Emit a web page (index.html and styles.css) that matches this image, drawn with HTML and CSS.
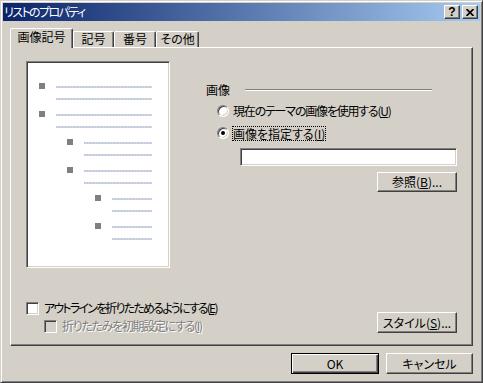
FILE: index.html
```html
<!DOCTYPE html>
<html lang="ja">
<head>
<meta charset="utf-8">
<title>リストのプロパティ</title>
<link rel="stylesheet" href="styles.css">
</head>
<body>
<div class="window">
  <div class="titlebar">
    <span class="title">リストのプロパティ</span>
    <div class="tbtns">
      <span class="tbtn help">?</span>
      <span class="tbtn"><svg width="8" height="7" viewBox="0 0 8 7"><path d="M0.5 0 L7.5 7 M7.5 0 L0.5 7" stroke="#000" stroke-width="1.7" fill="none"/></svg></span>
    </div>
  </div>
  <div class="body">
    <div class="tabs">
      <div class="tab active w1">画像記号</div>
      <div class="tab w2">記号</div>
      <div class="tab w3">番号</div>
      <div class="tab w4">その他</div>
    </div>
    <div class="panel">
      <div class="top">
        <div class="preview">
          <div class="item"><span class="bullet"></span><div class="lines"><i></i><i></i></div></div>
          <div class="item"><span class="bullet"></span><div class="lines"><i></i><i></i></div></div>
          <div class="item lv2"><span class="bullet"></span><div class="lines"><i></i><i></i></div></div>
          <div class="item lv2"><span class="bullet"></span><div class="lines"><i></i><i></i></div></div>
          <div class="item lv3"><span class="bullet"></span><div class="lines"><i></i><i></i></div></div>
          <div class="item lv3"><span class="bullet"></span><div class="lines"><i></i><i></i></div></div>
        </div>
        <div class="right">
          <div class="group-head"><span>画像</span><div class="etch"></div></div>
          <div class="radio-row"><span class="radio"></span><span class="sp-r1">現在のテーマの画像を使用する(<u>U</u>)</span></div>
          <div class="radio-row"><span class="radio checked"></span><span class="focus">画像を指定する(<u>I</u>)</span></div>
          <div class="field"></div>
          <div class="btn-row"><div class="btn browse">参照(<u>B</u>)...</div></div>
        </div>
      </div>
      <div class="bottom">
        <div class="checks">
          <div class="check-row"><span class="check"></span><span class="sp-c1">アウトラインを折りたためるようにする(<u>E</u>)</span></div>
          <div class="check-row sub disabled"><span class="check"></span><span class="sp-c2">折りたたみを初期設定にする(<u>I</u>)</span></div>
        </div>
        <div class="btn style">スタイル(<u>S</u>)...</div>
      </div>
    </div>
    <div class="actions">
      <div class="btn default ok">OK</div>
      <div class="btn cancel">キャンセル</div>
    </div>
  </div>
</div>
</body>
</html>
```
FILE: styles.css
```css
* { box-sizing: border-box; }
html, body { margin: 0; padding: 0; background: #d4d0c8; }
body {
  font-family: "Noto Sans CJK JP", "Noto Sans", sans-serif;
  font-size: 12px;
  line-height: 14px;
  font-feature-settings: "palt";
  color: #000;
}
u { text-decoration: underline; text-underline-offset: 1px; }

.window {
  width: 483px;
  height: 383px;
  background: #d4d0c8;
  border: 1px solid;
  border-color: #d4d0c8 #404040 #404040 #d4d0c8;
  box-shadow: inset 1px 1px #fff, inset -1px -1px #808080;
  padding: 2px;
  display: flex;
  flex-direction: column;
}

.titlebar {
  height: 18px;
  background: linear-gradient(to right, #0a246a, #a6caf0);
  display: flex;
  align-items: center;
  justify-content: space-between;
  padding: 0 2px 0 1px;
}
.title { color: #fff; letter-spacing: -1.6px; }
.tbtns { display: flex; gap: 2px; }
.tbtn {
  width: 16px;
  height: 14px;
  background: #d4d0c8;
  border: 1px solid;
  border-color: #fff #404040 #404040 #fff;
  box-shadow: inset -1px -1px #808080;
  display: flex;
  align-items: center;
  justify-content: center;
}
.help {
  font-family: "Liberation Sans", sans-serif;
  font-weight: bold;
  font-size: 12px;
  line-height: 12px;
}

.body { padding: 7px 7px 0 7px; }

.tabs {
  height: 19px;
  display: flex;
  align-items: flex-end;
}
.tab {
  height: 16px;
  border-top: 1px solid #fff;
  border-left: 1px solid #fff;
  border-right: 1px solid #404040;
  box-shadow: inset -1px 0 #808080;
  border-radius: 2px 2px 0 0;
  text-align: center;
  background: #d4d0c8;
}
.tab.active {
  height: 20px;
  margin-bottom: -1px;
  padding-top: 1px;
  position: relative;
  z-index: 1;
}
.w1 { width: 63px; }
.w2 { width: 41px; }
.w3 { width: 42px; }
.w4 { width: 43px; }

.panel {
  border: 1px solid;
  border-color: #fff #404040 #404040 #fff;
  box-shadow: inset -1px -1px #808080;
  padding: 13px 0 11px 15px;
}
.top { display: flex; }

.preview {
  width: 144px;
  height: 207px;
  background: #fff;
  border: 1px solid;
  border-color: #808080 #fff #fff #808080;
  box-shadow: inset 1px 1px #404040, inset -1px -1px #d4d0c8;
  padding: 21px 17px 0 12px;
}
.item { display: flex; height: 28px; }
.item.lv2 { padding-left: 28px; }
.item.lv3 { padding-left: 56px; }
.bullet {
  width: 6px;
  height: 6px;
  background: #808080;
  margin-right: 11px;
  flex: none;
}
.lines {
  flex: 1;
  padding-top: 3px;
  display: flex;
  flex-direction: column;
  gap: 10px;
}
.lines i {
  display: block;
  height: 2px;
  background: repeating-linear-gradient(90deg, #b4c8f4 0 1px, #d4d4d4 1px 3px);
}

.right {
  flex: 1;
  margin-left: 36px;
  padding: 22px 15px 0 0;
}
.group-head {
  display: flex;
  align-items: center;
  height: 14px;
}
.etch {
  flex: 1;
  height: 2px;
  border-top: 1px solid #808080;
  border-bottom: 1px solid #fff;
  margin: 0 25px 0 15px;
}
.radio-row {
  display: flex;
  align-items: center;
  gap: 4px;
  height: 16px;
  margin-top: 6px;
  padding-left: 11px;
}
.radio {
  width: 12px;
  height: 12px;
  border-radius: 50%;
  background: #fff;
  border: 1px solid;
  border-color: #808080 #fff #fff #808080;
  box-shadow: inset 1px 1px #404040, inset -1px -1px #d4d0c8;
  display: flex;
  align-items: center;
  justify-content: center;
  flex: none;
}
.radio.checked::after {
  content: "";
  width: 4px;
  height: 4px;
  border-radius: 50%;
  background: #000;
}
.focus {
  outline: 1px dotted #000;
  line-height: 13px;
}
.sp-r1 { letter-spacing: -1.2px; }
.sp-c1 { letter-spacing: -1.8px; }
.sp-c2 { letter-spacing: -1.3px; }
.field {
  margin: 7px 0 0 34px;
  height: 18px;
  background: #fff;
  border: 1px solid;
  border-color: #808080 #fff #fff #808080;
  box-shadow: inset 1px 1px #404040, inset -1px -1px #d4d0c8;
}
.btn-row {
  display: flex;
  justify-content: flex-end;
  margin-top: 6px;
}

.btn {
  background: #d4d0c8;
  border: 1px solid;
  border-color: #fff #404040 #404040 #fff;
  box-shadow: inset -1px -1px #808080, inset 1px 1px #d4d0c8;
  display: flex;
  align-items: center;
  justify-content: center;
  height: 21px;
}
.browse { width: 80px; height: 20px; }
.style { width: 80px; margin: 0 15px 1px 0; }

.bottom {
  display: flex;
  justify-content: space-between;
  align-items: flex-end;
  margin-top: 32px;
}
.checks { display: flex; flex-direction: column; gap: 2px; }
.check-row {
  display: flex;
  align-items: center;
  gap: 5px;
  height: 16px;
}
.check-row.sub { padding-left: 18px; }
.check {
  width: 13px;
  height: 13px;
  background: #fff;
  border: 1px solid;
  border-color: #808080 #fff #fff #808080;
  box-shadow: inset 1px 1px #404040, inset -1px -1px #d4d0c8;
  flex: none;
}
.disabled { color: #808080; text-shadow: 1px 1px #fff; }
.disabled .check { background: #d4d0c8; }

.actions {
  display: flex;
  justify-content: flex-end;
  gap: 7px;
  margin-top: 7px;
}
.ok { width: 88px; }
.cancel { width: 87px; }
.btn.default {
  border: 1px solid #000;
  box-shadow: inset 1px 1px #fff, inset -1px -1px #404040, inset -2px -2px #808080;
}
```
